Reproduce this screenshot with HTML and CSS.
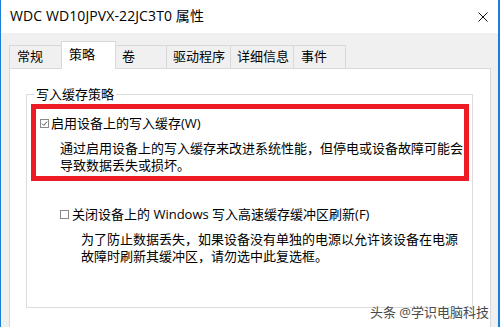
FILE: index.html
```html
<!DOCTYPE html>
<html lang="zh-CN">
<head>
<meta charset="utf-8">
<title>WDC WD10JPVX-22JC3T0 属性</title>
<link rel="stylesheet" href="styles.css">
</head>
<body>
<div class="window">
  <div class="titlebar">
    <span class="title">WDC WD10JPVX-22JC3T0 属性</span>
    <svg class="close" width="10" height="10" viewBox="0 0 10 10"><path d="M0.5 0.5 L9.5 9.5 M9.5 0.5 L0.5 9.5" stroke="#111" stroke-width="1" fill="none"/></svg>
  </div>
  <div class="body">
    <div class="tabs">
      <div class="tab tab-general">常规</div>
      <div class="tab tab-policy active">策略</div>
      <div class="tab tab-volume">卷</div>
      <div class="tab tab-driver">驱动程序</div>
      <div class="tab tab-details">详细信息</div>
      <div class="tab tab-events">事件</div>
    </div>
    <div class="panel">
      <fieldset class="group">
        <legend>写入缓存策略</legend>
        <div class="highlight">
          <div class="option">
            <svg class="cb" width="9" height="9" viewBox="0 0 9 9"><rect x="0.5" y="0.5" width="8" height="8" fill="#fff" stroke="#8a8a8a"/><path d="M2 4.6 L3.7 6.3 L7 2.6" stroke="#555" stroke-width="1" fill="none"/></svg>
            <span>启用设备上的写入缓存(W)</span>
          </div>
          <div class="desc desc-1">通过启用设备上的写入缓存来改进系统性能，但停电或设备故障可能会<br>导致数据丢失或损坏。</div>
        </div>
        <div class="option option-2">
          <svg class="cb" width="9" height="9" viewBox="0 0 9 9"><rect x="0.5" y="0.5" width="8" height="8" fill="#fff" stroke="#8a8a8a"/></svg>
          <span>关闭设备上的 Windows 写入高速缓存缓冲区刷新(F)</span>
        </div>
        <div class="desc desc-2">为了防止数据丢失，如果设备没有单独的电源以允许该设备在电源<br>故障时刷新其缓冲区，请勿选中此复选框。</div>
      </fieldset>
    </div>
  </div>
  <div class="watermark">头条 @学识电脑科技</div>
</div>
</body>
</html>
```

FILE: styles.css
```css
html, body {
  margin: 0;
  padding: 0;
}
body {
  width: 500px;
  height: 327px;
  overflow: hidden;
  font-family: "Open Sans", "Noto Sans CJK SC", sans-serif;
  font-size: 13px;
  color: #000;
  background: #f0f0f0;
}
.window {
  position: relative;
  width: 500px;
  height: 327px;
  box-sizing: border-box;
  border-left: 1px solid #1b7fd6;
  border-right: 2px solid #1b7fd6;
  background: #f0f0f0;
  display: flex;
  flex-direction: column;
}
.titlebar {
  height: 33px;
  flex: none;
  background: #fff;
  display: flex;
  align-items: center;
  justify-content: space-between;
  padding: 0 10px 0 9px;
}
.title {
  font-size: 14px;
  line-height: 16px;
  margin-top: -1px;
  letter-spacing: 0.1px;
}
.close {
  display: block;
  margin-top: 1px;
}
.body {
  flex: 1;
  display: flex;
  flex-direction: column;
  padding: 9px 7px 0 8px;
  min-height: 0;
}
.tabs {
  display: flex;
  align-items: flex-end;
  height: 27px;
  flex: none;
  position: relative;
  z-index: 2;
  margin-bottom: -1px;
}
.tab {
  box-sizing: border-box;
  flex: none;
  height: 23px;
  margin-bottom: 1px;
  padding: 0 0 0 7px;
  border: 1px solid #d9d9d9;
  border-bottom: none;
  margin-right: -1px;
  background: #f0f0f0;
  line-height: 21px;
  white-space: nowrap;
}
.tab-general { width: 53px; }
.tab-policy { width: 55px; }
.tab-volume { width: 52px; padding-left: 6px; }
.tab-driver { width: 65px; padding-left: 6px; }
.tab-details { width: 64px; padding-left: 6px; }
.tab-events { width: 53px; }
.tab.active {
  height: 28px;
  margin-bottom: 0;
  background: #fff;
  line-height: 24px;
  position: relative;
  z-index: 3;
}
.panel {
  flex: 1;
  background: #fff;
  border: 1px solid #d9d9d9;
  border-bottom: none;
  padding: 17px 17px 0 16px;
  min-height: 0;
}
.group {
  margin: 0;
  padding: 0;
  border: 1px solid #dcdcdc;
  height: 220px;
  min-width: 0;
}
.group legend {
  margin-left: 7px;
  padding: 0 2px;
  line-height: 16px;
}
.highlight {
  margin: 2px 3px 0 4px;
  border: 5px solid #ed1c24;
  padding: 6px 0 4px 4px;
}
.option {
  display: flex;
  align-items: center;
  line-height: 17px;
  white-space: nowrap;
}
.cb {
  display: block;
  flex: none;
  margin-right: 2px;
}
.desc {
  line-height: 16.5px;
  white-space: nowrap;
  margin-top: 8px;
}
.desc-1 {
  padding-left: 20px;
  margin-bottom: -1px;
}
.option-2 {
  margin-top: 25px;
  padding-left: 33px;
}
.option-2 .cb {
  margin-right: 3px;
}
.desc-2 {
  padding-left: 54px;
}
.watermark {
  position: absolute;
  right: 9px;
  bottom: 7px;
  font-size: 13px;
  line-height: 16px;
  color: #4a4a4a;
  text-shadow: 0 0 2px #fff, 0 0 1px #fff;
  white-space: nowrap;
}
```
